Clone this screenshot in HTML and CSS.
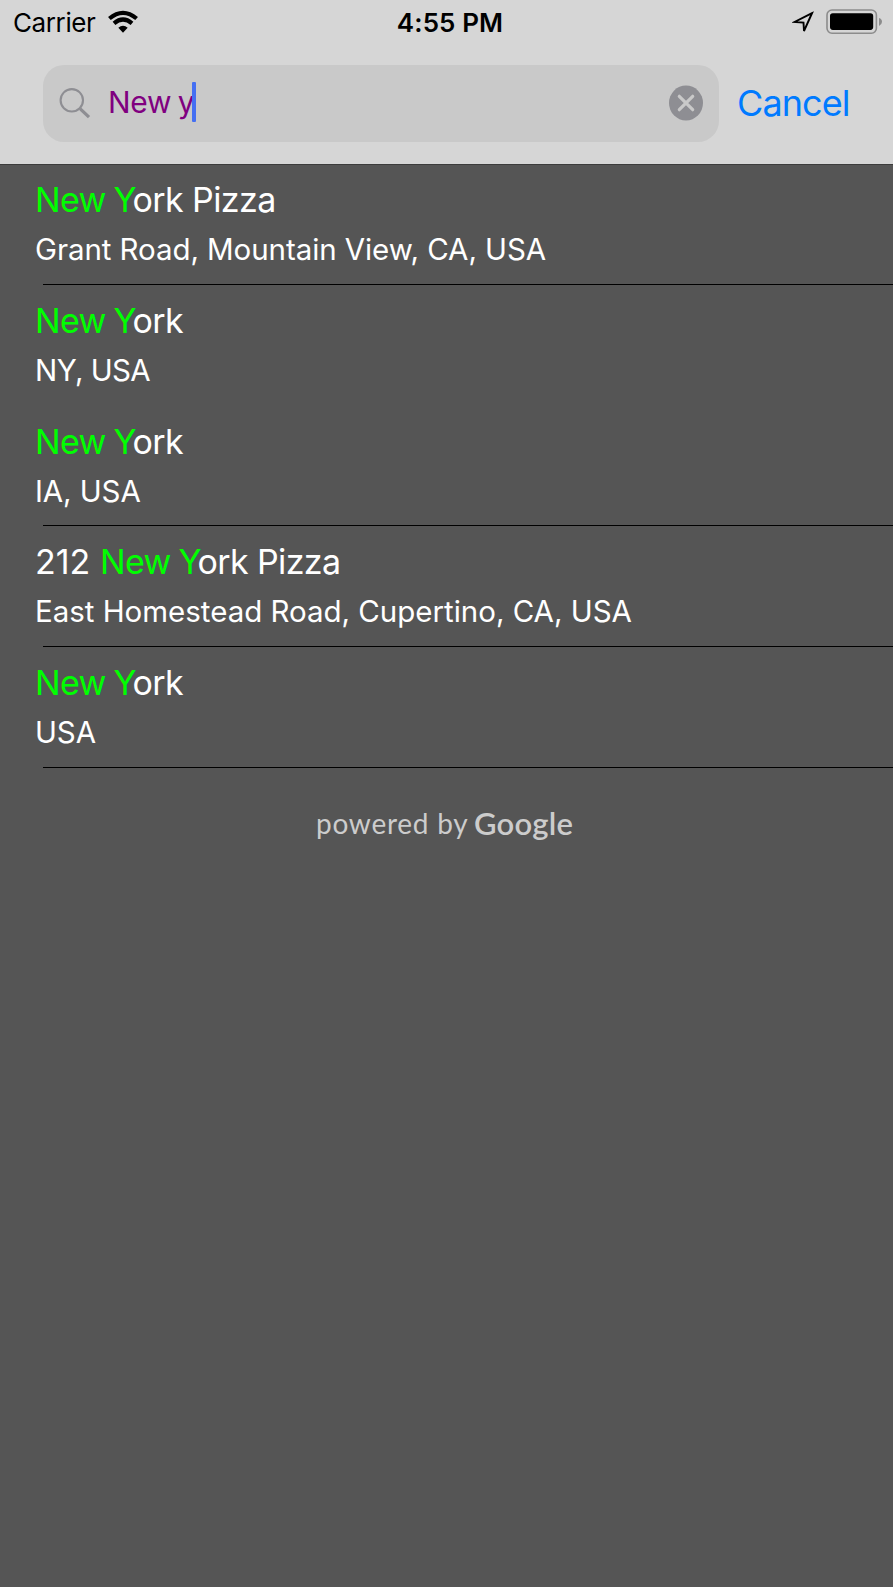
FILE: index.html
```
<!DOCTYPE html>
<html lang="en">
<head>
<meta charset="utf-8">
<title>Places search</title>
<link rel="stylesheet" href="styles.css">
</head>
<body>
<header class="header">
  <div class="status">
    <div class="status-left">
      <span class="carrier">Carrier</span>
      <svg class="wifi" width="32" height="24" viewBox="0 0 32 24">
        <g fill="none" stroke="#000" stroke-width="4.2">
          <path d="M2.4 8.5Q16 -2.9 29.6 8.5"/>
          <path d="M7 13.4Q16 5.7 25 13.4"/>
        </g>
        <path d="M11.3 17.8Q16 13.8 20.7 17.8L16 22.8Z"/>
      </svg>
    </div>
    <span class="time">4:55 PM</span>
    <div class="status-right">
      <svg class="location" width="23" height="23" viewBox="0 0 23 23">
        <path d="M20 2.2L2.6 11L11.5 11.6L12 20Z" fill="none" stroke="#000" stroke-width="1.9"/>
      </svg>
      <svg class="battery" width="57" height="26" viewBox="0 0 57 26">
        <rect x="1" y="1" width="49.4" height="23.2" rx="5" fill="none" stroke="#8c8c8c" stroke-width="1.6"/>
        <rect x="4" y="4.3" width="43.2" height="16.6" rx="2.8"/>
        <path d="M53 9Q56 10 56 12.8T53 17Z" fill="#8c8c8c"/>
      </svg>
    </div>
  </div>
  <div class="search">
    <div class="field">
      <svg class="glass" width="32" height="32" viewBox="0 0 32 32" fill="none" stroke="#8e8e93">
        <circle cx="12.8" cy="12.3" r="11.2" stroke-width="2.1"/>
        <path d="M21 20.6L30 29.2" stroke-width="3.2"/>
      </svg>
      <span class="query">New y</span><i class="caret"></i>
      <svg class="clear" width="34" height="36" viewBox="0 0 34 36">
        <ellipse cx="17" cy="18" rx="17" ry="17.5" fill="#8e8e93"/>
        <path d="M10.3 11.3L23.7 24.7M23.7 11.3L10.3 24.7" stroke="#c9c9c9" stroke-width="3.2" stroke-linecap="round"/>
      </svg>
    </div>
    <span class="cancel">Cancel</span>
  </div>
</header>
<main class="results">
  <div class="row"><div class="name"><b>New Y</b>ork Pizza</div><div class="place">Grant Road, Mountain View, CA, USA</div></div>
  <div class="row unlined"><div class="name"><b>New Y</b>ork</div><div class="place tight">NY, USA</div></div>
  <div class="row"><div class="name"><b>New Y</b>ork</div><div class="place">IA, USA</div></div>
  <div class="row"><div class="name"><span class="number">212 </span><b>New Y</b>ork Pizza</div><div class="place wide">East Homestead Road, Cupertino, CA, USA</div></div>
  <div class="row"><div class="name"><b>New Y</b>ork</div><div class="place">USA</div></div>
</main>
<footer class="credit"><span class="powered">powered by</span><span class="google">Google</span></footer>
</body>
</html>
```
FILE: styles.css
```
* { box-sizing: border-box; }
body {
  margin: 0;
  min-height: 1587px;
  background: #555;
  color: #fff;
  font-family: Inter, "Liberation Sans", sans-serif;
  white-space: nowrap;
}
svg { display: block; flex: none; }
.header {
  height: 165px;
  background: #d6d6d6;
  border-bottom: 1px solid #3c3c3c;
}
.status {
  display: grid;
  grid-template-columns: 1fr auto 1fr;
  height: 65px;
  color: #000;
  line-height: 32px;
}
.status-left, .status-right { display: flex; }
.carrier { margin: 7px 0 0 13px; font-size: 26px; letter-spacing: -0.4px; width: 94px; }
.wifi { margin-top: 10px; }
.time { margin-top: 7px; padding-left: 7px; font-size: 26px; font-weight: 600; letter-spacing: 0.1px; }
.status-right { justify-content: flex-end; }
.location { margin: 11px 11px 0 0; }
.battery { margin: 9px 10px 0 0; }
.search { display: flex; padding-left: 43px; }
.field {
  display: flex;
  width: 676px;
  height: 77px;
  padding-right: 16px;
  border-radius: 21px;
  background: #c9c9c9;
}
.glass { margin: 23px 0 0 16px; }
.query { margin: 17px 0 0 17px; width: 84px; color: #800080; font-size: 30px; line-height: 40px; letter-spacing: -0.3px; word-spacing: -1.5px; }
.caret { width: 4px; height: 40px; margin-top: 17px; background: #446ff2; border-radius: 1px; }
.clear { margin: 20px 0 0 auto; }
.cancel { margin: 14px 0 0 18px; color: #007aff; font-size: 36px; line-height: 48px; letter-spacing: -0.9px; }
.results { height: 602.75px; }
.row { height: 120.75px; padding: 14px 0 0 35px; background: linear-gradient(#000, #000) 43px calc(100% - 1px) / 100% 1px no-repeat; }
.unlined { background: none; }
.name { font-size: 34px; line-height: 42px; letter-spacing: -0.6px; }
.name b { margin-right: -3.6px; color: #0f0; font-weight: 400; word-spacing: -1.2px; }
.number { letter-spacing: 0; }
.place { margin-top: 10px; font-size: 29.5px; line-height: 36px; letter-spacing: -0.08px; }
.tight { letter-spacing: -0.6px; }
.wide { letter-spacing: -0.02px; }
.credit { display: flex; padding: 35px 0 0 316px; color: #ccc; }
.powered { width: 158px; font: 28px/40px Lato, sans-serif; letter-spacing: 0.75px; }
.google { font: 600 31px/40px Lato, sans-serif; letter-spacing: 0.2px; }
```
